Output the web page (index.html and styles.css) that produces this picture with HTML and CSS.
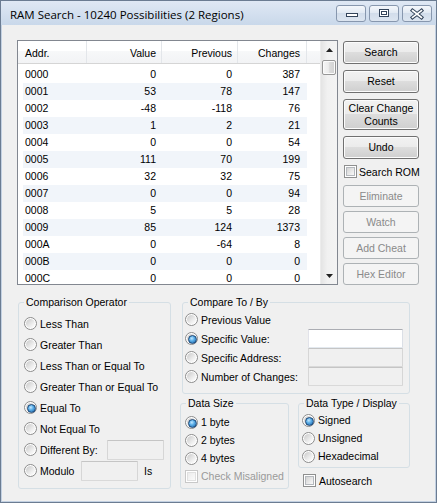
FILE: index.html
```html
<!DOCTYPE html>
<html>
<head>
<meta charset="utf-8">
<title>RAM Search</title>
<link rel="stylesheet" href="styles.css">
</head>
<body>
<div class="window">
  <div class="titlebar">
    <span class="title">RAM Search - 10240 Possibilities (2 Regions)</span>
    <div class="caption">
      <span class="cbtn"><svg width="28" height="15" viewBox="0 0 28 15"><rect x="9.5" y="7.5" width="11" height="3" fill="#fff" stroke="#33445a"/></svg></span>
      <span class="cbtn"><svg width="28" height="15" viewBox="0 0 28 15"><rect x="9.5" y="3.5" width="9" height="7" fill="#fff" stroke="#33445a"/><rect x="11.5" y="5.5" width="5" height="3" fill="none" stroke="#33445a"/></svg></span>
      <span class="cbtn"><svg width="28" height="15" viewBox="0 0 28 15"><path d="M9.5 4.5 L18.5 11.5 M18.5 4.5 L9.5 11.5" stroke="#33445a" stroke-width="3.6" stroke-linecap="square" fill="none"/><path d="M9.5 4.5 L18.5 11.5 M18.5 4.5 L9.5 11.5" stroke="#fff" stroke-width="1.6" stroke-linecap="square" fill="none"/></svg></span>
    </div>
  </div>
  <div class="client">
    <div class="top">
      <div class="listbox">
        <div class="list-main">
          <div class="lhead">
            <span class="hc h-addr">Addr.</span>
            <span class="hc h-val">Value</span>
            <span class="hc h-prev">Previous</span>
            <span class="hc h-chg">Changes</span>
            <span class="hc h-fill"></span>
          </div>
          <div class="lrows">
            <div class="lrow"><span class="c-addr">0000</span><span class="c-val">0</span><span class="c-prev">0</span><span class="c-chg">387</span></div>
            <div class="lrow"><span class="c-addr">0001</span><span class="c-val">53</span><span class="c-prev">78</span><span class="c-chg">147</span></div>
            <div class="lrow"><span class="c-addr">0002</span><span class="c-val">-48</span><span class="c-prev">-118</span><span class="c-chg">76</span></div>
            <div class="lrow"><span class="c-addr">0003</span><span class="c-val">1</span><span class="c-prev">2</span><span class="c-chg">21</span></div>
            <div class="lrow"><span class="c-addr">0004</span><span class="c-val">0</span><span class="c-prev">0</span><span class="c-chg">54</span></div>
            <div class="lrow"><span class="c-addr">0005</span><span class="c-val">111</span><span class="c-prev">70</span><span class="c-chg">199</span></div>
            <div class="lrow"><span class="c-addr">0006</span><span class="c-val">32</span><span class="c-prev">32</span><span class="c-chg">75</span></div>
            <div class="lrow"><span class="c-addr">0007</span><span class="c-val">0</span><span class="c-prev">0</span><span class="c-chg">94</span></div>
            <div class="lrow"><span class="c-addr">0008</span><span class="c-val">5</span><span class="c-prev">5</span><span class="c-chg">28</span></div>
            <div class="lrow"><span class="c-addr">0009</span><span class="c-val">85</span><span class="c-prev">124</span><span class="c-chg">1373</span></div>
            <div class="lrow"><span class="c-addr">000A</span><span class="c-val">0</span><span class="c-prev">-64</span><span class="c-chg">8</span></div>
            <div class="lrow"><span class="c-addr">000B</span><span class="c-val">0</span><span class="c-prev">0</span><span class="c-chg">0</span></div>
            <div class="lrow"><span class="c-addr">000C</span><span class="c-val">0</span><span class="c-prev">0</span><span class="c-chg">0</span></div>
          </div>
        </div>
        <div class="vscroll">
          <span class="sb-btn"><svg width="7" height="4" viewBox="0 0 7 4"><polygon points="0,4 3.5,0 7,4" fill="#222"/></svg></span>
          <span class="sb-thumb"></span>
          <span class="sb-track"></span>
          <span class="sb-btn"><svg width="7" height="4" viewBox="0 0 7 4"><polygon points="0,0 7,0 3.5,4" fill="#222"/></svg></span>
        </div>
      </div>
      <div class="btncol">
        <button class="btn b-search">Search</button>
        <button class="btn b-gap">Reset</button>
        <button class="btn b-gap b-tall">Clear Change<br>Counts</button>
        <button class="btn b-gap">Undo</button>
        <label class="chk rom"><span class="cbox"></span><span>Search ROM</span></label>
        <button class="btn dis b-elim">Eliminate</button>
        <button class="btn dis b-dgap">Watch</button>
        <button class="btn dis b-dgap">Add Cheat</button>
        <button class="btn dis b-dgap">Hex Editor</button>
      </div>
    </div>
    <div class="bottom">
      <div class="group g-cmp">
        <span class="legend">Comparison Operator</span>
        <label class="opt"><span class="radio"></span><span>Less Than</span></label>
        <label class="opt"><span class="radio"></span><span>Greater Than</span></label>
        <label class="opt"><span class="radio"></span><span>Less Than or Equal To</span></label>
        <label class="opt"><span class="radio"></span><span>Greater Than or Equal To</span></label>
        <label class="opt"><span class="radio on"></span><span>Equal To</span></label>
        <label class="opt"><span class="radio"></span><span>Not Equal To</span></label>
        <label class="opt"><span class="radio"></span><span>Different By:</span><span class="tb tb-dis tb-diff"></span></label>
        <label class="opt"><span class="radio"></span><span class="mod-label">Modulo</span><span class="tb tb-dis tb-mod"></span><span class="is">Is</span></label>
      </div>
      <div class="rcol">
        <div class="group g-to">
          <span class="legend">Compare To / By</span>
          <label class="opt"><span class="radio"></span><span>Previous Value</span></label>
          <label class="opt"><span class="radio on"></span><span>Specific Value:</span><span class="tb tb-to"></span></label>
          <label class="opt"><span class="radio"></span><span>Specific Address:</span><span class="tb tb-dis tb-to"></span></label>
          <label class="opt"><span class="radio"></span><span>Number of Changes:</span><span class="tb tb-dis tb-to"></span></label>
        </div>
        <div class="lower">
          <div class="group g-size">
            <span class="legend">Data Size</span>
            <label class="opt"><span class="radio on"></span><span>1 byte</span></label>
            <label class="opt"><span class="radio"></span><span>2 bytes</span></label>
            <label class="opt"><span class="radio"></span><span>4 bytes</span></label>
            <label class="opt dis"><span class="cbox cbox-dis"></span><span>Check Misaligned</span></label>
          </div>
          <div class="dtcol">
            <div class="group g-type">
              <span class="legend">Data Type / Display</span>
              <label class="opt"><span class="radio on"></span><span>Signed</span></label>
              <label class="opt"><span class="radio"></span><span>Unsigned</span></label>
              <label class="opt"><span class="radio"></span><span>Hexadecimal</span></label>
            </div>
            <label class="chk auto"><span class="cbox"></span><span>Autosearch</span></label>
          </div>
        </div>
      </div>
    </div>
  </div>
</div>
</body>
</html>
```

FILE: styles.css
```css
* { box-sizing: border-box; }
html, body { margin: 0; padding: 0; background: #f0f0f0; }
body {
  font-family: "Liberation Sans", Arial, sans-serif;
  font-size: 10.5px;
  color: #000;
}

.window {
  width: 437px;
  height: 503px;
  border: 1px solid #6b7c92;
  display: flex;
  flex-direction: column;
  background: #f0f0f0;
}

.titlebar {
  height: 24px;
  flex: none;
  display: flex;
  align-items: center;
  justify-content: space-between;
  padding: 0 4px 0 9px;
  background: linear-gradient(#dfe8f4, #c9d8ea);
}
.title {
  font-family: "Open Sans", "Noto Sans", sans-serif;
  font-size: 11.5px;
  padding-top: 2px;
  color: #000;
  white-space: nowrap;
}
.caption { display: flex; gap: 3px; }
.cbtn {
  width: 30px;
  height: 17px;
  border: 1px solid #8797ae;
  border-radius: 3px;
  background: linear-gradient(#f4f7fb, #e0e8f2 50%, #d2ddeb 50%, #dce5f0);
  display: block;
}
.cbtn svg { display: block; }

.client {
  flex: 1;
  border: 1px solid #c3d1e2;
  border-top: none;
  padding-top: 15px;
}

.top {
  display: flex;
  gap: 5px;
  margin-left: 15px;
}

.listbox {
  width: 321px;
  height: 245px;
  border: 1px solid #828790;
  background: #fff;
  display: flex;
  overflow: hidden;
}
.list-main { width: 302px; flex: none; overflow: hidden; }
.lhead {
  display: flex;
  height: 23px;
  border-bottom: 1px solid #d5d5d5;
  background: linear-gradient(#ffffff 0, #ffffff 45%, #f7f8f9 46%, #f2f3f5 100%);
}
.hc {
  display: block;
  height: 22px;
  line-height: 21px;
  padding-top: 2px;
  border-right: 1px solid #e3e6ea;
  white-space: nowrap;
}
.h-addr { width: 69px; padding-left: 7px; }
.h-val { width: 75px; text-align: right; padding-right: 5px; }
.h-prev { width: 76px; text-align: right; padding-right: 5px; }
.h-chg { width: 69px; text-align: right; padding-right: 6px; }
.h-fill { flex: 1; border-right: none; }

.lrows { margin-top: 2px; }
.lrow {
  display: flex;
  height: 17px;
  line-height: 17px;
  margin-left: 5px;
  width: 284px;
}
.lrow:nth-child(even) { background: #f1f5fa; }
.c-addr { width: 64px; padding-left: 2px; }
.c-val { width: 75px; text-align: right; padding-right: 6px; }
.c-prev { width: 76px; text-align: right; padding-right: 6px; }
.c-chg { width: 69px; text-align: right; padding-right: 7px; }

.vscroll {
  width: 17px;
  flex: none;
  display: flex;
  flex-direction: column;
  background: linear-gradient(to right, #e4e4e4, #f1f1f1 40%, #f3f3f3);
  border-left: 1px solid #ececec;
}
.sb-btn {
  height: 17px;
  flex: none;
  display: flex;
  align-items: center;
  justify-content: center;
}
.sb-btn svg { display: block; }
.sb-thumb {
  height: 15px;
  margin: 2px 1px 0 1px;
  flex: none;
  border: 1px solid #979797;
  border-radius: 2px;
  background: linear-gradient(to right, #f6f6f6, #ececec 45%, #dcdcdc 55%, #d2d2d2);
  box-shadow: inset 0 0 0 1px #fbfbfb;
}
.sb-track { flex: 1; }

.btncol {
  width: 76px;
  display: flex;
  flex-direction: column;
}
.btn {
  display: block;
  width: 76px;
  height: 23px;
  padding: 0 2px;
  margin: 0;
  border: 1px solid #707070;
  border-radius: 3px;
  background: linear-gradient(#f2f2f2 0, #ebebeb 50%, #dddddd 50%, #cfcfcf 100%);
  box-shadow: inset 0 0 0 1px #fcfcfc;
  font: inherit;
  line-height: 13px;
  color: #000;
  text-align: center;
}
.b-search { margin-top: 1px; }
.b-gap { margin-top: 6px; }
.b-tall { height: 31px; }
.btn.dis {
  height: 22px;
  border-color: #adb2b5;
  background: #f4f4f4;
  box-shadow: none;
  color: #8a8a8a;
}
.b-elim { margin-top: 7px; }
.b-dgap { margin-top: 4px; }

.chk {
  display: flex;
  align-items: center;
  gap: 3px;
  height: 13px;
  white-space: nowrap;
}
.rom { margin-top: 6px; margin-left: 1px; gap: 2px; }

.cbox {
  width: 13px;
  height: 13px;
  flex: none;
  border: 1px solid #8e8f8f;
  background: #fff;
  position: relative;
}
.cbox::before {
  content: "";
  position: absolute;
  left: 1px; top: 1px; right: 1px; bottom: 1px;
  border: 1px solid #b4b8bd;
  background: linear-gradient(135deg, #d3d3d3, #f9f9f9);
}
.cbox-dis { border-color: #c8c8c8; }
.cbox-dis::before { border-color: #e0e0e0; background: linear-gradient(135deg, #ececec, #fbfbfb); }

.bottom {
  display: flex;
  gap: 9px;
  margin-top: 17px;
  margin-left: 16px;
}

.group {
  position: relative;
  border: 1px solid #d5dfe5;
  border-radius: 3px;
}
.legend {
  position: absolute;
  top: -7px;
  left: 5px;
  padding: 0 2px;
  line-height: 13px;
  background: #f0f0f0;
  white-space: nowrap;
}

.opt {
  display: flex;
  align-items: center;
  gap: 3px;
  white-space: nowrap;
}
.opt.dis { color: #9a9a9a; }

.radio {
  width: 13px;
  height: 13px;
  flex: none;
  border-radius: 50%;
  border: 1px solid #8b8b8b;
  background: #fff;
  position: relative;
}
.radio::before {
  content: "";
  position: absolute;
  left: 1px; top: 1px; right: 1px; bottom: 1px;
  border-radius: 50%;
  background: linear-gradient(135deg, #c9c9c9, #f2f2f2 70%, #fdfdfd);
}
.radio.on::after {
  content: "";
  position: absolute;
  left: 2px; top: 2px;
  width: 7px; height: 7px;
  border-radius: 50%;
  border: 1px solid #1c4675;
  background: radial-gradient(circle at 40% 35%, #c4e8ff 0, #5aaee8 40%, #1b5c9e 100%);
}

.tb {
  display: block;
  flex: none;
  background: #fff;
  border: 1px solid;
  border-color: #abadb3 #dbdfe6 #e3e9ef #e2e3ea;
  border-radius: 1px;
}
.tb-dis {
  background: #f0f0f0;
  border-color: #c5c5c5 #d6d6d6 #d9d9d9 #d6d6d6;
}

.g-cmp {
  width: 153px;
  height: 187px;
  padding: 10px 6px 0 5px;
}
.g-cmp .opt { height: 21px; }
.tb-diff { width: 57px; height: 20px; margin-left: auto; }
.mod-label { width: 38px; }
.tb-mod { width: 57px; height: 20px; }
.is { margin-left: 3px; }

.rcol { display: flex; flex-direction: column; }
.g-to {
  margin-left: 2px;
  width: 228px;
  height: 92px;
  padding: 7px 6px 0 2px;
}
.g-to .opt { height: 19px; }
.tb-to { width: 95px; height: 19px; margin-left: auto; }

.lower { display: flex; gap: 9px; margin-top: 9px; }
.g-size {
  width: 109px;
  height: 86px;
  padding: 9px 0 0 4px;
}
.g-size .opt { height: 18px; }
.dtcol { display: flex; flex-direction: column; }
.g-type {
  width: 112px;
  height: 65px;
  padding: 7px 0 0 3px;
}
.g-type .opt { height: 18px; }
.auto { margin-top: 6px; margin-left: 5px; }
```
